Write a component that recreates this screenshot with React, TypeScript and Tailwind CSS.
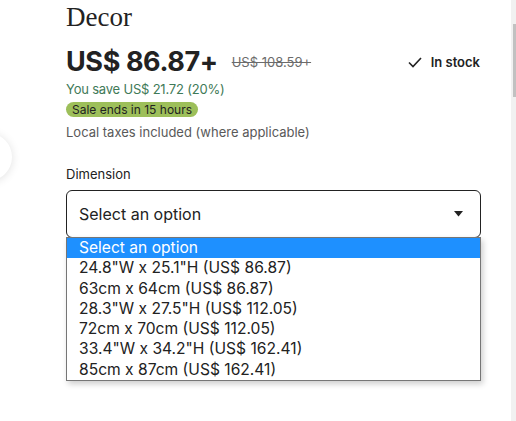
const options = [
  '24.8"W x 25.1"H (US$ 86.87)',
  "63cm x 64cm (US$ 86.87)",
  '28.3"W x 27.5"H (US$ 112.05)',
  "72cm x 70cm (US$ 112.05)",
  '33.4"W x 34.2"H (US$ 162.41)',
  "85cm x 87cm (US$ 162.41)",
];

const sans = "font-['Inter','Noto_Sans',sans-serif]";

export default function App() {
  return (
    <div className={`relative flex h-[421px] w-[516px] overflow-hidden bg-white text-[#222] ${sans}`}>
      {/* carousel nav button, mostly off screen */}
      <div className="absolute left-[-36px] top-[133px] h-[48px] w-[48px] rounded-full bg-white shadow-[0_1px_10px_rgba(0,0,0,0.12)]" />

      <main className="flex-1 pl-[66px] pr-[30px] pt-[1px]">
        <h1 className="font-['Liberation_Serif',serif] text-[27px] leading-[32px] font-normal text-[#222]">
          Decor
        </h1>

        <div className="mt-[12px] flex h-[34px] items-center justify-between">
          <div className="flex items-center">
            <span className="text-[27px] leading-[34px] font-bold tracking-[-0.4px]">US$ 86.87+</span>
            <span className="ml-[14px] text-[13px] leading-[16px] text-[#6b6b6b] line-through">US$ 108.59+</span>
          </div>
          <div className="flex items-center gap-[9px] pr-[1px]">
            <svg width="14" height="11" viewBox="0 0 14 11" fill="none">
              <path d="M1 5.5 L5 9.5 L13 1" stroke="#222" strokeWidth="1.6" />
            </svg>
            <span className="text-[13px] leading-[16px] font-semibold">In stock</span>
          </div>
        </div>

        <p className="mt-[2px] text-[13px] leading-[16px] tracking-[-0.2px] text-[#3f7a58]">You save US$ 21.72 (20%)</p>

        <div className="mt-[5px] w-fit rounded-full bg-[#9dbf5a] px-[6px] text-[12px] leading-[15px] text-[#222]">
          Sale ends in 15 hours
        </div>

        <p className="mt-[7px] text-[13px] leading-[16px] text-[#595959]">Local taxes included (where applicable)</p>

        <p className="mt-[26px] text-[13px] leading-[16px] text-[#222]">Dimension</p>

        <div className="relative mt-[8px]">
          <div className="flex h-[48px] items-center justify-between rounded-[6px] border border-[#222] pl-[12px] pr-[17px]">
            <span className="text-[16px] leading-[20px]">Select an option</span>
            <svg width="9" height="6" viewBox="0 0 9 6">
              <path d="M0 0 H9 L4.5 5.5 Z" fill="#222" />
            </svg>
          </div>

          <ul className="absolute left-0 right-0 top-[47px] border border-[#767676] bg-white shadow-[2px_3px_6px_rgba(0,0,0,0.2)]">
            <li className="h-[20.3px] bg-[#1e90ff] pl-[12px] text-[15.6px] leading-[20px] text-white">Select an option</li>
            {options.map((o) => (
              <li key={o} className="h-[20.3px] pl-[12px] text-[15.6px] leading-[20px] text-[#222]">
                {o}
              </li>
            ))}
          </ul>
        </div>
      </main>

      {/* browser scrollbar */}
      <div className="w-[5px] bg-[#f1f1f1]">
        <div className="ml-[2px] mt-[24px] h-[73px] w-[3px] bg-[#c1c1c1]" />
      </div>
    </div>
  );
}
